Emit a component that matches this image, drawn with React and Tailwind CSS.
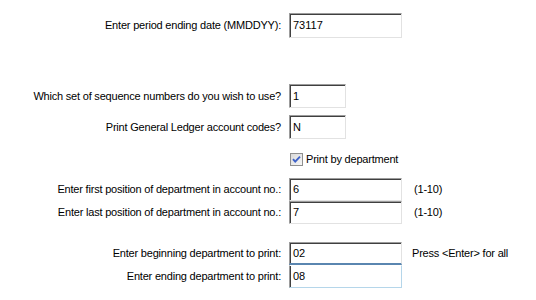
import React from "react";

const font = { fontFamily: '"Liberation Sans", Arial, sans-serif' };

function Box({ value, w = "w-[113px]", h = "h-[24px]", variant = "normal" }) {
  let cls =
    "flex items-center pl-[3px] text-[11px] text-black bg-white border border-t-[#9c9c9c] border-l-[#9c9c9c] border-r-[#e2e2e2] border-b-[#e2e2e2] shadow-[inset_1px_1px_0_#404040]";
  if (variant === "focus")
    cls =
      "flex items-center pl-[3px] text-[11px] text-black bg-white border border-t-[#9c9c9c] border-l-[#9c9c9c] border-r-[#e2e2e2] border-b-[#5a86b0] border-b-2 shadow-[inset_1px_1px_0_#404040]";
  if (variant === "hover")
    cls =
      "flex items-center pl-[3px] text-[11px] text-black bg-white border border-t-white border-l-[#9c9c9c] border-r-[#b5d6ea] border-b-[#b5d6ea] shadow-[inset_1px_0_0_#404040]";
  return (
    <div className={`${cls} ${w} ${h} shrink-0`}>
      <span>{value}</span>
    </div>
  );
}

function Row({ label, children, className = "" }) {
  return (
    <div className={`flex items-center ${className}`}>
      <div className="w-[289px] shrink-0 pr-[8px] text-right text-[11px] tracking-[-0.2px] text-black whitespace-nowrap">
        {label}
      </div>
      {children}
    </div>
  );
}

export default function App() {
  return (
    <div className="w-[536px] h-[300px] bg-white overflow-hidden" style={font}>
      <div className="flex flex-col pt-[13px]">
        <Row label="Enter period ending date (MMDDYY):">
          <Box value="73117" h="h-[25px]" />
        </Row>

        <Row label="Which set of sequence numbers do you wish to use?" className="mt-[46px]">
          <Box value="1" w="w-[57px]" />
        </Row>
        <Row label="Print General Ledger account codes?" className="mt-[7px]">
          <Box value="N" w="w-[57px]" />
        </Row>

        <div className="flex items-center mt-[14px] pl-[290px] h-[13px]">
          <svg width="13" height="13" viewBox="0 0 13 13" className="shrink-0">
            <defs>
              <linearGradient id="cbg" x1="0" y1="0" x2="1" y2="1">
                <stop offset="0" stopColor="#d8d8d8" />
                <stop offset="1" stopColor="#f8f8f8" />
              </linearGradient>
            </defs>
            <rect x="0.5" y="0.5" width="12" height="12" fill="url(#cbg)" stroke="#8f8f8f" />
            <path d="M3 6.2 L5.2 8.6 L10 3.6" fill="none" stroke="#3e62c8" strokeWidth="1.9" />
          </svg>
          <span className="ml-[3px] text-[11px] tracking-[-0.2px] text-black whitespace-nowrap">Print by department</span>
        </div>

        <Row label="Enter first position of department in account no.:" className="mt-[12px]">
          <Box value="6" h="h-[23px]" />
          <span className="ml-[12px] text-[11px] tracking-[-0.2px] text-black">(1-10)</span>
        </Row>
        <Row label="Enter last position of department in account no.:">
          <Box value="7" h="h-[23px]" />
          <span className="ml-[12px] text-[11px] tracking-[-0.2px] text-black">(1-10)</span>
        </Row>

        <Row label="Enter beginning department to print:" className="mt-[18px]">
          <Box value="02" h="h-[23px]" variant="focus" />
          <span className="ml-[10px] text-[11px] tracking-[-0.2px] text-black whitespace-nowrap">Press &lt;Enter&gt; for all</span>
        </Row>
        <Row label="Enter ending department to print:">
          <Box value="08" h="h-[23px]" variant="hover" />
        </Row>
      </div>
    </div>
  );
}
